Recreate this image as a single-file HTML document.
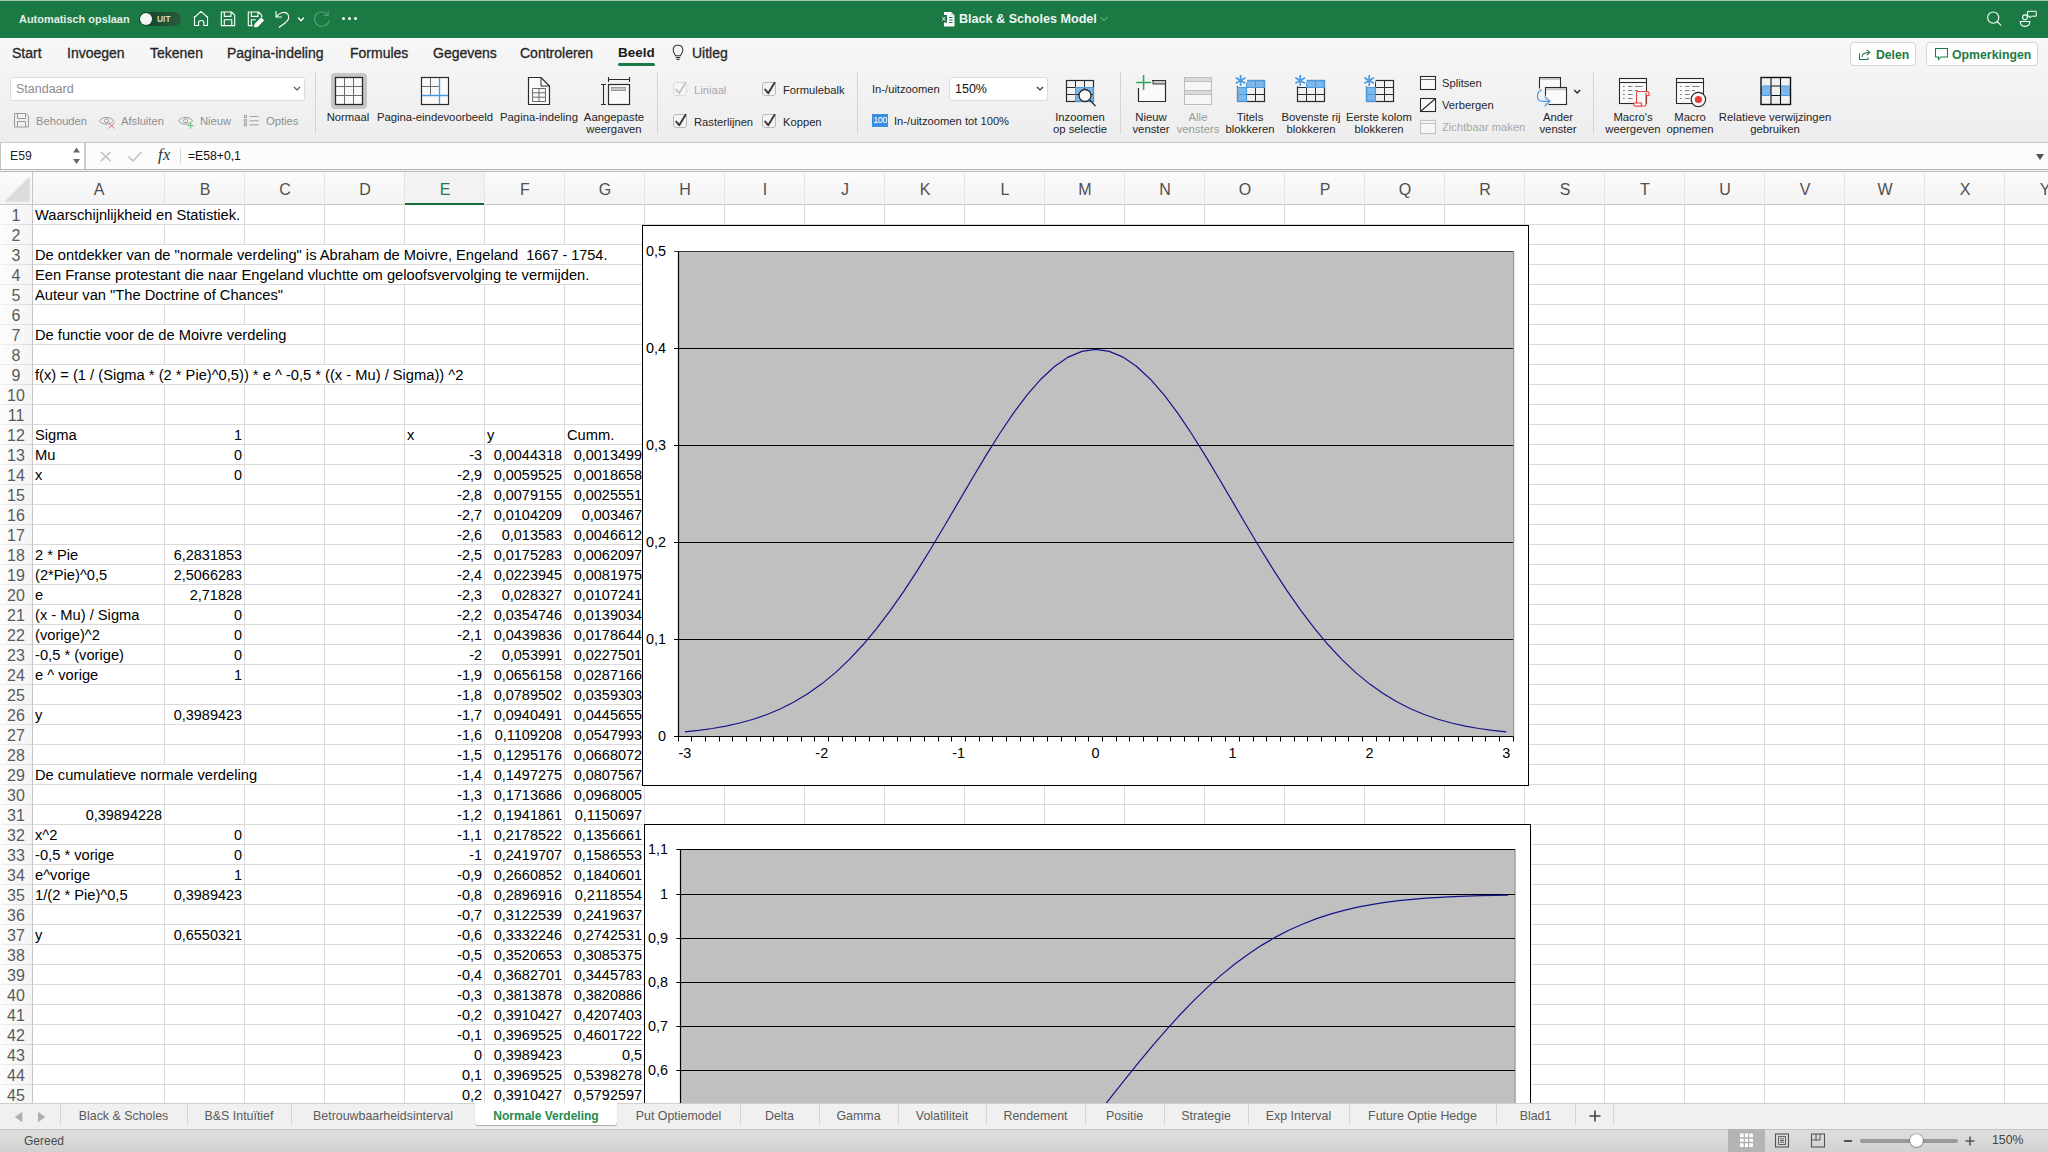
<!DOCTYPE html><html><head><meta charset="utf-8"><style>
*{margin:0;padding:0;box-sizing:border-box}
html,body{width:2048px;height:1152px;overflow:hidden;background:#fff;font-family:"Liberation Sans",sans-serif}
.a{position:absolute}
.t{position:absolute;white-space:nowrap}
.cell{position:absolute;white-space:nowrap;font-size:14.7px;color:#000;line-height:20px;height:20px}
.r{text-align:right}
.rib{font-size:11.3px;color:#262626;text-align:center;line-height:12px}
.dis{color:#9a9a9a}
.tab{font-size:14px;color:#262626;-webkit-text-stroke:0.3px #262626}
.sh{font-size:12.4px;color:#5a5a5a;text-align:center}
</style></head><body>
<div class="a" style="left:0;top:0;width:2048px;height:38px;background:#1b7944"></div>
<div class="a" style="left:0;top:0;width:2048px;height:1px;background:#a3c9b3"></div>
<div class="t" style="left:19px;top:11px;font-size:10.95px;font-weight:bold;color:#e2ede6;line-height:16px">Automatisch opslaan</div>
<div class="a" style="left:139px;top:12px;width:42px;height:14px;border-radius:7px;background:linear-gradient(90deg,#123f26,#2a5a3e)"></div>
<div class="a" style="left:140px;top:13px;width:12px;height:12px;border-radius:6px;background:#f6f6f6"></div>
<div class="t" style="left:157px;top:12px;font-size:8.4px;font-weight:bold;color:#c9d9cf;line-height:14px">UIT</div>
<svg class="a" style="left:0;top:0" width="400" height="38" viewBox="0 0 400 38" fill="none" stroke="#fff" stroke-width="1.1" stroke-linejoin="round" stroke-linecap="round">
<path d="M194.3 17.5 L201 11.3 L207.7 17.5 M194.5 16.5 V25.5 H198.6 V22.6 C198.6 19.8 203.9 19.8 203.9 22.6 V25.5 H207.5 V16.5"/>
<path d="M221.3 12 H231.5 L234.7 15.2 V25.6 H221.3 Z M224.3 12 V16.4 H231 V12 M224.3 25.6 V19.8 H231.8 V25.6"/>
<path d="M248.3 25.6 V12 H258.5 L261.7 15.2 V17 M251.3 12 V16.4 H258 V12 M251.3 25.6 V19.8 H255.5 M248.3 25.6 H252.5"/>
<path d="M254.6 26.8 L255.2 24.2 L261.2 18.2 L263.4 20.4 L257.4 26.4 Z" fill="#fff"/>
<path d="M276 11.5 V17 H281.5 M276.2 16.8 C280 12 285.5 11 288 14.5 C290 17.5 288 20.5 285 23 L279.3 27.3"/>
<path d="M298.4 18 L301 20.8 L303.6 18" stroke-width="1.3"/>
<path d="M327.6 15 C325.8 11.6 320.5 10.8 317.3 13.2 C313.6 16 313.6 22 317.3 24.8 C321 27.6 327.5 26 329 21 M328.2 11.2 V15.5 H324" stroke="#5a9e77"/>
</svg>
<div class="a" style="left:342px;top:17px;width:3px;height:3px;border-radius:2px;background:#fff"></div>
<div class="a" style="left:348px;top:17px;width:3px;height:3px;border-radius:2px;background:#fff"></div>
<div class="a" style="left:354px;top:17px;width:3px;height:3px;border-radius:2px;background:#fff"></div>
<svg class="a" style="left:0;top:0" width="1000" height="38" viewBox="0 0 1000 38">
<path d="M944 12 H951 L954.5 15.5 V26.5 H944 Z" fill="#fafafa"/><path d="M951 12 V15.5 H954.5" fill="#d8d8d8"/>
<path d="M949 17.5 H952.5 M949 20 H952.5 M949 22.5 H952.5" stroke="#1e7a46" stroke-width="1"/>
<rect x="940.5" y="15" width="6.5" height="7.5" fill="#1a6e3e"/><path d="M942 16.8 L945.5 20.8 M945.5 16.8 L942 20.8" stroke="#fff" stroke-width="0.9"/>
</svg>
<div class="t" style="left:959px;top:11px;font-size:12.6px;font-weight:bold;color:#eef4f0;line-height:16px">Black &amp; Scholes Model</div>
<svg class="a" style="left:1099px;top:15px" width="10" height="8" viewBox="0 0 10 8" fill="none" stroke="#8fc0a3" stroke-width="1"><path d="M1.5 2 L5 5.5 L8.5 2"/></svg>
<svg class="a" style="left:0;top:0" width="2048" height="38" viewBox="0 0 2048 38" fill="none" stroke="#fff" stroke-width="1.1" stroke-linecap="round">
<circle cx="1993.2" cy="17.6" r="5.6"/><path d="M1997.2 21.6 L2000.8 25.2"/>
<circle cx="2025" cy="17.3" r="2.4"/><path d="M2020.3 21.5 H2029.8 C2029.8 24.8 2027.5 26.4 2025 26.4 C2022.5 26.4 2020.3 24.8 2020.3 21.5 Z"/>
<path d="M2028 11.3 H2036.2 V16.2 H2031.5 L2029.8 18 V16.2 H2028 Z" stroke-width="1"/></svg>
<div class="a" style="left:0;top:38px;width:2048px;height:105px;background:linear-gradient(#f7f7f7,#ededed)"></div>
<div class="a" style="left:0;top:142px;width:2048px;height:1px;background:#d6d6d6"></div>
<div class="t tab" style="left:12px;top:44px;line-height:18px">Start</div>
<div class="t tab" style="left:67px;top:44px;line-height:18px">Invoegen</div>
<div class="t tab" style="left:150px;top:44px;line-height:18px">Tekenen</div>
<div class="t tab" style="left:227px;top:44px;line-height:18px">Pagina-indeling</div>
<div class="t tab" style="left:350px;top:44px;line-height:18px">Formules</div>
<div class="t tab" style="left:433px;top:44px;line-height:18px">Gegevens</div>
<div class="t tab" style="left:520px;top:44px;line-height:18px">Controleren</div>
<div class="t tab" style="left:618px;top:44px;line-height:18px;font-weight:bold;font-size:13.5px;color:#1c1c1c;-webkit-text-stroke:0">Beeld</div>
<div class="a" style="left:618px;top:63px;width:37px;height:3px;border-radius:2px;background:#1b7944"></div>
<svg class="a" style="left:0;top:38px" width="700" height="30" viewBox="0 38 700 30" fill="none" stroke="#333" stroke-width="1.05"><path d="M678 45.3 C675 45.3 673.2 47.5 673.2 50.2 C673.2 52.6 675 54 675.5 55.8 H680.5 C681 54 682.8 52.6 682.8 50.2 C682.8 47.5 681 45.3 678 45.3 Z M675.8 57.6 H680.2 M676.6 59.4 H679.4"/></svg>
<div class="t tab" style="left:692px;top:44px;line-height:18px">Uitleg</div>
<div class="a" style="left:1850px;top:42px;width:66px;height:24px;border:1px solid #d6d6d6;border-radius:4px;background:#fff"></div>
<svg class="a" style="left:1857px;top:46px" width="16" height="16" viewBox="0 0 16 16" fill="none" stroke="#1e7a46" stroke-width="1.05"><path d="M2.5 7.5 V13.5 H11 V11.5 M5 11 C5 7.5 8 6.5 12 6.5 M9.8 3.8 L12.8 6.5 L9.8 9.2"/></svg>
<div class="t" style="left:1876px;top:47px;font-size:12.2px;font-weight:bold;color:#1e7a46;line-height:16px">Delen</div>
<div class="a" style="left:1926px;top:42px;width:112px;height:24px;border:1px solid #d6d6d6;border-radius:4px;background:#fff"></div>
<svg class="a" style="left:1934px;top:46px" width="16" height="16" viewBox="0 0 16 16" fill="none" stroke="#1e7a46" stroke-width="1.05"><path d="M1.5 2.5 H13.5 V11 H7 L4.5 13.5 V11 H1.5 Z"/></svg>
<div class="t" style="left:1952px;top:47px;font-size:12.3px;font-weight:bold;color:#1e7a46;line-height:16px">Opmerkingen</div>
<div class="a" style="left:10px;top:77px;width:295px;height:24px;border:1px solid #dcdcdc;border-radius:3px;background:#fff"></div>
<div class="t" style="left:16px;top:81px;font-size:12.5px;color:#8c8c8c;line-height:16px">Standaard</div>
<svg class="a" style="left:292px;top:85px" width="10" height="8" viewBox="0 0 10 8" fill="none" stroke="#555" stroke-width="1.2"><path d="M2 2 L5 5 L8 2"/></svg>
<svg class="a" style="left:0;top:100px" width="320" height="40" viewBox="0 100 320 40" fill="none" stroke="#9a9a9a" stroke-width="1">
<path d="M14.5 113.5 H26 L28.5 116 V127 H14.5 Z M17.5 113.5 V118.5 H25.5 V113.5 M17.5 127 V121.5 H25.5 V127"/>
<path d="M99.5 120.8 C102.5 116.3 110.5 116.3 113.5 120.8 C110.5 125.3 102.5 125.3 99.5 120.8 Z"/><circle cx="106.5" cy="120.8" r="2"/>
<path d="M108.6 122.8 L114.6 128.5 M114.6 122.8 L108.6 128.5" stroke="#e86a6a" stroke-width="1"/>
<path d="M178.6 120.8 C181.6 116.3 189.6 116.3 192.6 120.8 C189.6 125.3 181.6 125.3 178.6 120.8 Z"/><circle cx="185.6" cy="120.8" r="2"/>
<path d="M190.7 122.5 V128.7 M187.6 125.6 H193.8" stroke="#5cbf7a" stroke-width="1"/>
<rect x="244.3" y="115.3" width="2.2" height="2.2" stroke-width="0.9"/><rect x="244.3" y="119.7" width="2.2" height="2.2" stroke-width="0.9"/><rect x="244.3" y="123.6" width="2.2" height="2.2" stroke-width="0.9"/>
<path d="M249.6 116.5 H258.7 M249.6 120.8 H258.7 M249.6 124.8 H258.7" stroke-width="0.9"/>
</svg>
<div class="t" style="left:36px;top:113px;font-size:11.2px;color:#8e8e8e;line-height:16px">Behouden</div>
<div class="t" style="left:121px;top:113px;font-size:11.2px;color:#8e8e8e;line-height:16px">Afsluiten</div>
<div class="t" style="left:200px;top:113px;font-size:11.2px;color:#8e8e8e;line-height:16px">Nieuw</div>
<div class="t" style="left:266px;top:113px;font-size:11.2px;color:#8e8e8e;line-height:16px">Opties</div>
<div class="a" style="left:315px;top:72px;width:1px;height:62px;background:#d4d4d4"></div>
<div class="a" style="left:657px;top:72px;width:1px;height:62px;background:#d4d4d4"></div>
<div class="a" style="left:857px;top:72px;width:1px;height:62px;background:#d4d4d4"></div>
<div class="a" style="left:1120px;top:72px;width:1px;height:62px;background:#d4d4d4"></div>
<div class="a" style="left:1593px;top:72px;width:1px;height:62px;background:#d4d4d4"></div>
<div class="a" style="left:673px;top:82px;width:14px;height:14px;border:1px solid #dadada;border-radius:3px;background:#f6f6f6"></div>
<svg class="a" style="left:673px;top:81px" width="16" height="16" viewBox="0 0 16 16" fill="none" stroke="#c4c4c4" stroke-width="2" stroke-linecap="round" stroke-linejoin="round"><path d="M3.2 8.6 L6.2 12.2 L12.6 1.8"/></svg>
<div class="a" style="left:673px;top:114px;width:14px;height:14px;border:1px solid #b8b8b8;border-radius:3px;background:#f4f4f4"></div>
<svg class="a" style="left:673px;top:113px" width="16" height="16" viewBox="0 0 16 16" fill="none" stroke="#3a3a3a" stroke-width="2" stroke-linecap="round" stroke-linejoin="round"><path d="M3.2 8.6 L6.2 12.2 L12.6 1.8"/></svg>
<div class="a" style="left:762px;top:82px;width:14px;height:14px;border:1px solid #b8b8b8;border-radius:3px;background:#f4f4f4"></div>
<svg class="a" style="left:762px;top:81px" width="16" height="16" viewBox="0 0 16 16" fill="none" stroke="#3a3a3a" stroke-width="2" stroke-linecap="round" stroke-linejoin="round"><path d="M3.2 8.6 L6.2 12.2 L12.6 1.8"/></svg>
<div class="a" style="left:762px;top:114px;width:14px;height:14px;border:1px solid #b8b8b8;border-radius:3px;background:#f4f4f4"></div>
<svg class="a" style="left:762px;top:113px" width="16" height="16" viewBox="0 0 16 16" fill="none" stroke="#3a3a3a" stroke-width="2" stroke-linecap="round" stroke-linejoin="round"><path d="M3.2 8.6 L6.2 12.2 L12.6 1.8"/></svg>
<div class="t dis" style="left:694px;top:82px;font-size:11.2px;line-height:16px;color:#a8a8a8">Liniaal</div>
<div class="t" style="left:694px;top:114px;font-size:11.2px;line-height:16px;color:#262626">Rasterlijnen</div>
<div class="t" style="left:783px;top:82px;font-size:11.2px;line-height:16px;color:#262626">Formulebalk</div>
<div class="t" style="left:783px;top:114px;font-size:11.2px;line-height:16px;color:#262626">Koppen</div>
<div class="t" style="left:872px;top:81px;font-size:11.2px;line-height:16px;color:#262626">In-/uitzoomen</div>
<div class="a" style="left:949px;top:77px;width:99px;height:24px;border:1px solid #dcdcdc;border-radius:3px;background:#fff"></div>
<div class="t" style="left:955px;top:81px;font-size:12.5px;line-height:16px;color:#111">150%</div>
<svg class="a" style="left:1035px;top:85px" width="10" height="8" viewBox="0 0 10 8" fill="none" stroke="#333" stroke-width="1.2"><path d="M2 2 L5 5 L8 2"/></svg>
<div class="a" style="left:872px;top:114px;width:16px;height:13px;background:#3a8ee0"></div>
<div class="t" style="left:872px;top:113px;width:16px;font-size:9px;line-height:15px;color:#fff;text-align:center;letter-spacing:-0.5px">100</div>
<div class="t" style="left:894px;top:113px;font-size:11.2px;line-height:16px;color:#262626">In-/uitzoomen tot 100%</div>
<div class="a" style="left:331px;top:73px;width:36px;height:36px;border-radius:4px;background:#c6c6c6"></div>
<svg class="a" style="left:0;top:0" width="2048" height="140" viewBox="0 0 2048 140" fill="none" stroke-linecap="butt"><rect x="335.5" y="77.5" width="27" height="27" fill="#fafafa" stroke="#2b2b2b" stroke-width="1.3"/><path d="M344.5 78 V104 M353.5 78 V104 M336 86.5 H362 M336 95.5 H362" stroke="#6b6b6b" stroke-width="1"/><rect x="421.5" y="77.5" width="27" height="27" fill="#fafafa" stroke="#2b2b2b" stroke-width="1.2"/><path d="M430.5 78 V95 M422 86.5 H439" stroke="#6b6b6b" stroke-width="1"/><path d="M439.5 78 V104 M422 95.5 H448" stroke="#4a9ae0" stroke-width="1.3"/><path d="M528.5 77.5 H541 L549.5 86 V104.5 H528.5 Z" fill="#fafafa" stroke="#2b2b2b" stroke-width="1.2"/><path d="M541 77.5 V86 H549.5" stroke="#2b2b2b" stroke-width="1"/><path d="M532.5 88.5 H545.5 V101.5 H532.5 Z M532.5 92.8 H545.5 M532.5 97.2 H545.5 M539 88.5 V101.5" stroke="#6b6b6b" stroke-width="1"/><path d="M608.5 79.5 H629.5 M608.5 77 V82 M629.5 77 V82" stroke="#2b2b2b" stroke-width="1.1"/><path d="M603.5 84.5 V105 M601 84.5 H606 M601 104.5 H606" stroke="#2b2b2b" stroke-width="1.1"/><rect x="608.5" y="84.5" width="21" height="20" fill="#fafafa" stroke="#2b2b2b" stroke-width="1.2"/><rect x="611.5" y="87.5" width="14" height="3" fill="#c4c4c4" stroke="#8a8a8a" stroke-width="0.8"/><rect x="1075.5" y="87.5" width="18" height="14" fill="#7db8ec"/><rect x="1066.5" y="80.5" width="27" height="21" fill="none" stroke="#2b2b2b" stroke-width="1.2"/><path d="M1075.5 81 V101 M1084.5 81 V101 M1067 87.5 H1093 M1067 94.5 H1093" stroke="#2b2b2b" stroke-width="1"/><path d="M1075.5 87.5 V101.5 H1093.5 V87.5 Z" stroke="#4a9ae0" stroke-width="1"/><circle cx="1085" cy="95.5" r="6" fill="#fafafa" stroke="#2b2b2b" stroke-width="1.3"/><path d="M1089.3 99.8 L1095.5 106" stroke="#2b2b2b" stroke-width="1.3"/><path d="M1138.5 88 V101.5 H1165.5 V80.5 H1152" fill="#fafafa" stroke="#2b2b2b" stroke-width="1.2"/><rect x="1153" y="80.5" width="12.5" height="3.5" fill="#c8c8c8" stroke="#2b2b2b" stroke-width="0.9"/><path d="M1143.6 75 V90 M1136.2 82.6 H1151.2" stroke="#2ea55c" stroke-width="1.5"/><rect x="1184.5" y="77.5" width="27" height="27" fill="#f6f6f6" stroke="#bdbdbd" stroke-width="1"/><rect x="1185" y="78" width="26" height="3.5" fill="#dadada"/><rect x="1185" y="91" width="26" height="3.5" fill="#dadada"/><path d="M1185 81.5 H1211 M1185 90.5 H1211 M1185 94.5 H1211" stroke="#bdbdbd" stroke-width="1"/><rect x="1246.5" y="80.5" width="18" height="7" fill="#7db8ec"/><rect x="1237" y="87.5" width="9.5" height="14" fill="#7db8ec"/><rect x="1237.5" y="80.5" width="27" height="21" fill="none" stroke="#2b2b2b" stroke-width="1.2"/><path d="M1246.5 81 V101 M1255.5 81 V101 M1237 87.5 H1264.5 M1237 94.5 H1264.5" stroke="#2b2b2b" stroke-width="1"/><path d="M1246.5 87.5 V80.5 H1264.5 V87.5 H1246.5 Z M1255.5 81 V87" stroke="#4a9ae0" stroke-width="1.1"/><path d="M1237.5 87.5 H1246.5 V101.5 H1237.5 Z M1237.5 94.5 H1246.5" stroke="#4a9ae0" stroke-width="1.1"/><circle cx="1240.6" cy="80.5" r="6.5" fill="#f3f3f3"/><path d="M1240.6 75 V86 M1235.8 77.75 L1245.4 83.25 M1235.8 83.25 L1245.4 77.75" stroke="#4a9ae0" stroke-width="1.7"/><rect x="1306.5" y="80.5" width="18" height="7" fill="#7db8ec"/><rect x="1297.5" y="80.5" width="27" height="21" fill="none" stroke="#2b2b2b" stroke-width="1.2"/><path d="M1306.5 81 V101 M1315.5 81 V101 M1297 87.5 H1324.5 M1297 94.5 H1324.5" stroke="#2b2b2b" stroke-width="1"/><path d="M1306.5 87.5 V80.5 H1324.5 V87.5 H1306.5 Z M1315.5 81 V87" stroke="#4a9ae0" stroke-width="1.1"/><circle cx="1300.2" cy="80.5" r="6.5" fill="#f3f3f3"/><path d="M1300.2 75 V86 M1295.4 77.75 L1305 83.25 M1295.4 83.25 L1305 77.75" stroke="#4a9ae0" stroke-width="1.7"/><rect x="1366" y="87.5" width="9.5" height="14" fill="#7db8ec"/><rect x="1366.5" y="80.5" width="27" height="21" fill="none" stroke="#2b2b2b" stroke-width="1.2"/><path d="M1375.5 81 V101 M1384.5 81 V101 M1366 87.5 H1393.5 M1366 94.5 H1393.5" stroke="#2b2b2b" stroke-width="1"/><path d="M1366.5 87.5 H1375.5 V101.5 H1366.5 Z M1366.5 94.5 H1375.5" stroke="#4a9ae0" stroke-width="1.1"/><circle cx="1369.2" cy="80.5" r="6.5" fill="#f3f3f3"/><path d="M1369.2 75 V86 M1364.4 77.75 L1374 83.25 M1364.4 83.25 L1374 77.75" stroke="#4a9ae0" stroke-width="1.7"/><rect x="1420.5" y="76.5" width="15" height="13" fill="#fafafa" stroke="#2b2b2b" stroke-width="1.1"/><path d="M1421 79.5 H1435" stroke="#6b6b6b" stroke-width="1"/><rect x="1420.5" y="98.5" width="15" height="13" fill="#fafafa" stroke="#2b2b2b" stroke-width="1.1"/><path d="M1421 111 L1435 99" stroke="#2b2b2b" stroke-width="1.1"/><rect x="1420.5" y="120.5" width="15" height="13" fill="#f6f6f6" stroke="#c2c2c2" stroke-width="1.1"/><path d="M1421 123.5 H1435" stroke="#c2c2c2" stroke-width="1"/><path d="M1539.5 88.5 V77.5 H1560.5 V87.5" fill="#fafafa" stroke="#2b2b2b" stroke-width="1.1"/><rect x="1540" y="78" width="20" height="2" fill="#c8c8c8"/><rect x="1545.5" y="87.5" width="21" height="17" fill="#fafafa" stroke="#2b2b2b" stroke-width="1.1"/><rect x="1546" y="88" width="20" height="2.2" fill="#c8c8c8"/><path d="M1541.8 89.6 C1535.8 92.2 1536 101.3 1542.5 101.3 H1549.6 M1544.6 96.6 L1549.8 101.3 L1544.6 106.2" stroke="#f2f2f2" stroke-width="3.2"/><path d="M1541.8 89.6 C1535.8 92.2 1536 101.3 1542.5 101.3 H1549.6 M1544.6 96.6 L1549.8 101.3 L1544.6 106.2" stroke="#4a9ae0" stroke-width="1.2"/><path d="M1574.2 90 L1577.2 93 L1580.2 90" stroke="#2b2b2b" stroke-width="1.4"/><rect x="1619.5" y="78.5" width="27" height="25" fill="#fafafa" stroke="#2b2b2b" stroke-width="1.1"/><path d="M1620 82.5 H1646" stroke="#2b2b2b" stroke-width="1.1"/><path d="M1623 86.5 H1624.8 M1628 86.5 H1632.5" stroke="#707070" stroke-width="0.9"/><path d="M1635 86.5 H1642.5" stroke="#707070" stroke-width="0.9"/><path d="M1623 90.5 H1624.8 M1628 90.5 H1632.5" stroke="#707070" stroke-width="0.9"/><path d="M1635 90.5 H1638" stroke="#707070" stroke-width="0.9"/><path d="M1623 94.5 H1624.8 M1628 94.5 H1632.5" stroke="#707070" stroke-width="0.9"/><path d="M1623 98.5 H1624.8 M1628 98.5 H1632.5" stroke="#707070" stroke-width="0.9"/><path d="M1636.5 106 V93 C1636.5 92 1637 91.5 1638 91.5 H1647 C1648.5 91.5 1649 92.5 1649 94 V95.5 H1646 V104.5 C1646 105.5 1645.5 106 1644.5 106 Z" fill="#fafafa" stroke="#e84040" stroke-width="1.1"/><path d="M1633.8 103 H1641.5 V106 H1635 C1634.2 106 1633.8 105.5 1633.8 104.7 Z M1646 95.5 V92.5" fill="#fafafa" stroke="#e84040" stroke-width="1.1"/><rect x="1676.5" y="78.5" width="27" height="25" fill="#fafafa" stroke="#2b2b2b" stroke-width="1.1"/><path d="M1677 82.5 H1703" stroke="#2b2b2b" stroke-width="1.1"/><path d="M1680 86.5 H1681.8 M1685 86.5 H1689.5" stroke="#707070" stroke-width="0.9"/><path d="M1692 86.5 H1699.5" stroke="#707070" stroke-width="0.9"/><path d="M1680 90.5 H1681.8 M1685 90.5 H1689.5" stroke="#707070" stroke-width="0.9"/><path d="M1692 90.5 H1695" stroke="#707070" stroke-width="0.9"/><path d="M1680 94.5 H1681.8 M1685 94.5 H1689.5" stroke="#707070" stroke-width="0.9"/><path d="M1680 98.5 H1681.8 M1685 98.5 H1689.5" stroke="#707070" stroke-width="0.9"/><circle cx="1698.4" cy="99.5" r="7.2" fill="#fafafa" stroke="#2b2b2b" stroke-width="1.2"/><circle cx="1698.4" cy="99.5" r="3.6" fill="#e63c3c"/><rect x="1761" y="86" width="10" height="9.5" fill="#7db8ec"/><rect x="1780.5" y="86" width="10" height="9.5" fill="#7db8ec"/><rect x="1761" y="77.5" width="29.5" height="27" fill="none" stroke="#111" stroke-width="1.4"/><path d="M1771 78 V104 M1780.5 78 V104 M1761.5 86 H1761.5 M1761.5 95.5 H1761.5" stroke="#111" stroke-width="1.1"/><path d="M1761.5 86 H1771 M1780.5 86 H1790 M1761.5 95.5 H1771 M1780.5 95.5 H1790" stroke="#4a9ae0" stroke-width="1.1"/><path d="M1771 86 H1780.5 M1771 95.5 H1780.5" stroke="#111" stroke-width="1"/></svg>
<div class="t rib " style="left:268px;top:111px;width:160px">Normaal</div>
<div class="t rib " style="left:355px;top:111px;width:160px">Pagina-eindevoorbeeld</div>
<div class="t rib " style="left:459px;top:111px;width:160px">Pagina-indeling</div>
<div class="t rib " style="left:534px;top:111px;width:160px">Aangepaste</div>
<div class="t rib " style="left:534px;top:123px;width:160px">weergaven</div>
<div class="t rib " style="left:1000px;top:111px;width:160px">Inzoomen</div>
<div class="t rib " style="left:1000px;top:123px;width:160px">op selectie</div>
<div class="t rib " style="left:1071px;top:111px;width:160px">Nieuw</div>
<div class="t rib " style="left:1071px;top:123px;width:160px">venster</div>
<div class="t rib dis" style="left:1118px;top:111px;width:160px">Alle</div>
<div class="t rib dis" style="left:1118px;top:123px;width:160px">vensters</div>
<div class="t rib " style="left:1170px;top:111px;width:160px">Titels</div>
<div class="t rib " style="left:1170px;top:123px;width:160px">blokkeren</div>
<div class="t rib " style="left:1231px;top:111px;width:160px">Bovenste rij</div>
<div class="t rib " style="left:1231px;top:123px;width:160px">blokkeren</div>
<div class="t rib " style="left:1299px;top:111px;width:160px">Eerste kolom</div>
<div class="t rib " style="left:1299px;top:123px;width:160px">blokkeren</div>
<div class="t" style="left:1442px;top:75px;font-size:11.2px;line-height:16px;color:#262626">Splitsen</div>
<div class="t" style="left:1442px;top:97px;font-size:11.2px;line-height:16px;color:#262626">Verbergen</div>
<div class="t" style="left:1442px;top:119px;font-size:11.2px;line-height:16px;color:#a8a8a8">Zichtbaar maken</div>
<div class="t rib " style="left:1478px;top:111px;width:160px">Ander</div>
<div class="t rib " style="left:1478px;top:123px;width:160px">venster</div>
<div class="t rib " style="left:1553px;top:111px;width:160px">Macro's</div>
<div class="t rib " style="left:1553px;top:123px;width:160px">weergeven</div>
<div class="t rib " style="left:1610px;top:111px;width:160px">Macro</div>
<div class="t rib " style="left:1610px;top:123px;width:160px">opnemen</div>
<div class="t rib " style="left:1695px;top:111px;width:160px">Relatieve verwijzingen</div>
<div class="t rib " style="left:1695px;top:123px;width:160px">gebruiken</div>
<div class="a" style="left:0;top:143px;width:2048px;height:26px;background:#fcfcfc"></div>
<div class="a" style="left:0;top:142px;width:2048px;height:1px;background:#c8c8c8"></div>
<div class="a" style="left:0;top:143px;width:86px;height:26px;background:#fff;border-left:1px solid #c4c4c4;border-right:2px solid #cfcfcf"></div>
<div class="t" style="left:10px;top:148px;font-size:12.2px;line-height:16px;color:#222">E59</div>
<svg class="a" style="left:72px;top:146px" width="10" height="20" viewBox="0 0 10 20" fill="#666"><path d="M1 6.5 L4.5 1.5 L8 6.5 Z M1 13 L4.5 18 L8 13 Z"/></svg>
<svg class="a" style="left:96px;top:148px" width="80" height="16" viewBox="0 0 80 16" fill="none" stroke="#c6c6c6" stroke-width="1.7"><path d="M4.8 3.8 L14.6 13.2 M14.6 3.8 L4.8 13.2"/><path d="M32.5 8.5 L37 13 L45.5 4"/></svg>
<div class="t" style="left:158px;top:145px;font-size:16.5px;line-height:20px;color:#333;font-family:'Liberation Serif',serif;font-style:italic;letter-spacing:0.5px">fx</div>
<div class="a" style="left:180px;top:149px;width:1px;height:15px;background:#d8d8d8"></div>
<div class="t" style="left:188px;top:148px;font-size:12.2px;line-height:16px;color:#111">=E58+0,1</div>
<svg class="a" style="left:2034px;top:152px" width="12" height="10" viewBox="0 0 12 10" fill="#555"><path d="M2 2 H10 L6 8 Z"/></svg>
<div class="a" style="left:0;top:169px;width:2048px;height:1px;background:#b4b4b4"></div>
<div class="a" style="left:0;top:170px;width:2048px;height:1px;background:#f4f4f4"></div>
<div class="a" style="left:0;top:171px;width:2048px;height:1px;background:#b8b8b8"></div>
<div class="a" style="left:0;top:172px;width:2048px;height:32px;background:linear-gradient(#fbfbfb,#f3f3f3)"></div>
<div class="a" style="left:0;top:204px;width:2048px;height:1px;background:#c8c8c8"></div>
<svg class="a" style="left:0;top:172px" width="32" height="32" viewBox="0 0 32 32"><path d="M4.3 29.8 L29.8 29.8 L29.8 4.2 Z" fill="#dcdcdc"/></svg>
<div class="a" style="left:32px;top:172px;width:1px;height:931px;background:#c6c6c6"></div>
<div class="a" style="left:404px;top:172px;width:81px;height:32px;background:#f2f2f2;border-left:1px solid #e2e2e2;border-right:1px solid #e2e2e2"></div>
<div class="a" style="left:404px;top:203px;width:81px;height:2px;background:#166a3a"></div>
<div class="t" style="left:33px;top:181px;width:132px;text-align:center;font-size:16px;line-height:18px;color:#505050">A</div>
<div class="a" style="left:164px;top:174px;width:1px;height:30px;background:#e4e4e4"></div>
<div class="t" style="left:165px;top:181px;width:80px;text-align:center;font-size:16px;line-height:18px;color:#505050">B</div>
<div class="a" style="left:244px;top:174px;width:1px;height:30px;background:#e4e4e4"></div>
<div class="t" style="left:245px;top:181px;width:80px;text-align:center;font-size:16px;line-height:18px;color:#505050">C</div>
<div class="a" style="left:324px;top:174px;width:1px;height:30px;background:#e4e4e4"></div>
<div class="t" style="left:325px;top:181px;width:80px;text-align:center;font-size:16px;line-height:18px;color:#505050">D</div>
<div class="a" style="left:404px;top:174px;width:1px;height:30px;background:#e4e4e4"></div>
<div class="t" style="left:405px;top:181px;width:80px;text-align:center;font-size:16px;line-height:18px;color:#1e7a46">E</div>
<div class="a" style="left:484px;top:174px;width:1px;height:30px;background:#e4e4e4"></div>
<div class="t" style="left:485px;top:181px;width:80px;text-align:center;font-size:16px;line-height:18px;color:#505050">F</div>
<div class="a" style="left:564px;top:174px;width:1px;height:30px;background:#e4e4e4"></div>
<div class="t" style="left:565px;top:181px;width:80px;text-align:center;font-size:16px;line-height:18px;color:#505050">G</div>
<div class="a" style="left:644px;top:174px;width:1px;height:30px;background:#e4e4e4"></div>
<div class="t" style="left:645px;top:181px;width:80px;text-align:center;font-size:16px;line-height:18px;color:#505050">H</div>
<div class="a" style="left:724px;top:174px;width:1px;height:30px;background:#e4e4e4"></div>
<div class="t" style="left:725px;top:181px;width:80px;text-align:center;font-size:16px;line-height:18px;color:#505050">I</div>
<div class="a" style="left:804px;top:174px;width:1px;height:30px;background:#e4e4e4"></div>
<div class="t" style="left:805px;top:181px;width:80px;text-align:center;font-size:16px;line-height:18px;color:#505050">J</div>
<div class="a" style="left:884px;top:174px;width:1px;height:30px;background:#e4e4e4"></div>
<div class="t" style="left:885px;top:181px;width:80px;text-align:center;font-size:16px;line-height:18px;color:#505050">K</div>
<div class="a" style="left:964px;top:174px;width:1px;height:30px;background:#e4e4e4"></div>
<div class="t" style="left:965px;top:181px;width:80px;text-align:center;font-size:16px;line-height:18px;color:#505050">L</div>
<div class="a" style="left:1044px;top:174px;width:1px;height:30px;background:#e4e4e4"></div>
<div class="t" style="left:1045px;top:181px;width:80px;text-align:center;font-size:16px;line-height:18px;color:#505050">M</div>
<div class="a" style="left:1124px;top:174px;width:1px;height:30px;background:#e4e4e4"></div>
<div class="t" style="left:1125px;top:181px;width:80px;text-align:center;font-size:16px;line-height:18px;color:#505050">N</div>
<div class="a" style="left:1204px;top:174px;width:1px;height:30px;background:#e4e4e4"></div>
<div class="t" style="left:1205px;top:181px;width:80px;text-align:center;font-size:16px;line-height:18px;color:#505050">O</div>
<div class="a" style="left:1284px;top:174px;width:1px;height:30px;background:#e4e4e4"></div>
<div class="t" style="left:1285px;top:181px;width:80px;text-align:center;font-size:16px;line-height:18px;color:#505050">P</div>
<div class="a" style="left:1364px;top:174px;width:1px;height:30px;background:#e4e4e4"></div>
<div class="t" style="left:1365px;top:181px;width:80px;text-align:center;font-size:16px;line-height:18px;color:#505050">Q</div>
<div class="a" style="left:1444px;top:174px;width:1px;height:30px;background:#e4e4e4"></div>
<div class="t" style="left:1445px;top:181px;width:80px;text-align:center;font-size:16px;line-height:18px;color:#505050">R</div>
<div class="a" style="left:1524px;top:174px;width:1px;height:30px;background:#e4e4e4"></div>
<div class="t" style="left:1525px;top:181px;width:80px;text-align:center;font-size:16px;line-height:18px;color:#505050">S</div>
<div class="a" style="left:1604px;top:174px;width:1px;height:30px;background:#e4e4e4"></div>
<div class="t" style="left:1605px;top:181px;width:80px;text-align:center;font-size:16px;line-height:18px;color:#505050">T</div>
<div class="a" style="left:1684px;top:174px;width:1px;height:30px;background:#e4e4e4"></div>
<div class="t" style="left:1685px;top:181px;width:80px;text-align:center;font-size:16px;line-height:18px;color:#505050">U</div>
<div class="a" style="left:1764px;top:174px;width:1px;height:30px;background:#e4e4e4"></div>
<div class="t" style="left:1765px;top:181px;width:80px;text-align:center;font-size:16px;line-height:18px;color:#505050">V</div>
<div class="a" style="left:1844px;top:174px;width:1px;height:30px;background:#e4e4e4"></div>
<div class="t" style="left:1845px;top:181px;width:80px;text-align:center;font-size:16px;line-height:18px;color:#505050">W</div>
<div class="a" style="left:1924px;top:174px;width:1px;height:30px;background:#e4e4e4"></div>
<div class="t" style="left:1925px;top:181px;width:80px;text-align:center;font-size:16px;line-height:18px;color:#505050">X</div>
<div class="a" style="left:2004px;top:174px;width:1px;height:30px;background:#e4e4e4"></div>
<div class="t" style="left:2005px;top:181px;width:80px;text-align:center;font-size:16px;line-height:18px;color:#505050">Y</div>
<div class="a" style="left:2084px;top:174px;width:1px;height:30px;background:#e4e4e4"></div>
<div class="t" style="left:2085px;top:181px;width:80px;text-align:center;font-size:16px;line-height:18px;color:#505050">Z</div>
<div class="a" style="left:2164px;top:174px;width:1px;height:30px;background:#e4e4e4"></div>
<div class="a" style="left:0;top:224px;width:2048px;height:1px;background:#dadada"></div>
<div class="a" style="left:0;top:244px;width:2048px;height:1px;background:#dadada"></div>
<div class="a" style="left:0;top:264px;width:2048px;height:1px;background:#dadada"></div>
<div class="a" style="left:0;top:284px;width:2048px;height:1px;background:#dadada"></div>
<div class="a" style="left:0;top:304px;width:2048px;height:1px;background:#dadada"></div>
<div class="a" style="left:0;top:324px;width:2048px;height:1px;background:#dadada"></div>
<div class="a" style="left:0;top:344px;width:2048px;height:1px;background:#dadada"></div>
<div class="a" style="left:0;top:364px;width:2048px;height:1px;background:#dadada"></div>
<div class="a" style="left:0;top:384px;width:2048px;height:1px;background:#dadada"></div>
<div class="a" style="left:0;top:404px;width:2048px;height:1px;background:#dadada"></div>
<div class="a" style="left:0;top:424px;width:2048px;height:1px;background:#dadada"></div>
<div class="a" style="left:0;top:444px;width:2048px;height:1px;background:#dadada"></div>
<div class="a" style="left:0;top:464px;width:2048px;height:1px;background:#dadada"></div>
<div class="a" style="left:0;top:484px;width:2048px;height:1px;background:#dadada"></div>
<div class="a" style="left:0;top:504px;width:2048px;height:1px;background:#dadada"></div>
<div class="a" style="left:0;top:524px;width:2048px;height:1px;background:#dadada"></div>
<div class="a" style="left:0;top:544px;width:2048px;height:1px;background:#dadada"></div>
<div class="a" style="left:0;top:564px;width:2048px;height:1px;background:#dadada"></div>
<div class="a" style="left:0;top:584px;width:2048px;height:1px;background:#dadada"></div>
<div class="a" style="left:0;top:604px;width:2048px;height:1px;background:#dadada"></div>
<div class="a" style="left:0;top:624px;width:2048px;height:1px;background:#dadada"></div>
<div class="a" style="left:0;top:644px;width:2048px;height:1px;background:#dadada"></div>
<div class="a" style="left:0;top:664px;width:2048px;height:1px;background:#dadada"></div>
<div class="a" style="left:0;top:684px;width:2048px;height:1px;background:#dadada"></div>
<div class="a" style="left:0;top:704px;width:2048px;height:1px;background:#dadada"></div>
<div class="a" style="left:0;top:724px;width:2048px;height:1px;background:#dadada"></div>
<div class="a" style="left:0;top:744px;width:2048px;height:1px;background:#dadada"></div>
<div class="a" style="left:0;top:764px;width:2048px;height:1px;background:#dadada"></div>
<div class="a" style="left:0;top:784px;width:2048px;height:1px;background:#dadada"></div>
<div class="a" style="left:0;top:804px;width:2048px;height:1px;background:#dadada"></div>
<div class="a" style="left:0;top:824px;width:2048px;height:1px;background:#dadada"></div>
<div class="a" style="left:0;top:844px;width:2048px;height:1px;background:#dadada"></div>
<div class="a" style="left:0;top:864px;width:2048px;height:1px;background:#dadada"></div>
<div class="a" style="left:0;top:884px;width:2048px;height:1px;background:#dadada"></div>
<div class="a" style="left:0;top:904px;width:2048px;height:1px;background:#dadada"></div>
<div class="a" style="left:0;top:924px;width:2048px;height:1px;background:#dadada"></div>
<div class="a" style="left:0;top:944px;width:2048px;height:1px;background:#dadada"></div>
<div class="a" style="left:0;top:964px;width:2048px;height:1px;background:#dadada"></div>
<div class="a" style="left:0;top:984px;width:2048px;height:1px;background:#dadada"></div>
<div class="a" style="left:0;top:1004px;width:2048px;height:1px;background:#dadada"></div>
<div class="a" style="left:0;top:1024px;width:2048px;height:1px;background:#dadada"></div>
<div class="a" style="left:0;top:1044px;width:2048px;height:1px;background:#dadada"></div>
<div class="a" style="left:0;top:1064px;width:2048px;height:1px;background:#dadada"></div>
<div class="a" style="left:0;top:1084px;width:2048px;height:1px;background:#dadada"></div>
<div class="a" style="left:0;top:1104px;width:2048px;height:1px;background:#dadada"></div>
<div class="a" style="left:0;top:1124px;width:2048px;height:1px;background:#dadada"></div>
<div class="a" style="left:164px;top:204px;width:1px;height:900px;background:#dadada"></div>
<div class="a" style="left:244px;top:204px;width:1px;height:900px;background:#dadada"></div>
<div class="a" style="left:324px;top:204px;width:1px;height:900px;background:#dadada"></div>
<div class="a" style="left:404px;top:204px;width:1px;height:900px;background:#dadada"></div>
<div class="a" style="left:484px;top:204px;width:1px;height:900px;background:#dadada"></div>
<div class="a" style="left:564px;top:204px;width:1px;height:900px;background:#dadada"></div>
<div class="a" style="left:644px;top:204px;width:1px;height:900px;background:#dadada"></div>
<div class="a" style="left:724px;top:204px;width:1px;height:900px;background:#dadada"></div>
<div class="a" style="left:804px;top:204px;width:1px;height:900px;background:#dadada"></div>
<div class="a" style="left:884px;top:204px;width:1px;height:900px;background:#dadada"></div>
<div class="a" style="left:964px;top:204px;width:1px;height:900px;background:#dadada"></div>
<div class="a" style="left:1044px;top:204px;width:1px;height:900px;background:#dadada"></div>
<div class="a" style="left:1124px;top:204px;width:1px;height:900px;background:#dadada"></div>
<div class="a" style="left:1204px;top:204px;width:1px;height:900px;background:#dadada"></div>
<div class="a" style="left:1284px;top:204px;width:1px;height:900px;background:#dadada"></div>
<div class="a" style="left:1364px;top:204px;width:1px;height:900px;background:#dadada"></div>
<div class="a" style="left:1444px;top:204px;width:1px;height:900px;background:#dadada"></div>
<div class="a" style="left:1524px;top:204px;width:1px;height:900px;background:#dadada"></div>
<div class="a" style="left:1604px;top:204px;width:1px;height:900px;background:#dadada"></div>
<div class="a" style="left:1684px;top:204px;width:1px;height:900px;background:#dadada"></div>
<div class="a" style="left:1764px;top:204px;width:1px;height:900px;background:#dadada"></div>
<div class="a" style="left:1844px;top:204px;width:1px;height:900px;background:#dadada"></div>
<div class="a" style="left:1924px;top:204px;width:1px;height:900px;background:#dadada"></div>
<div class="a" style="left:2004px;top:204px;width:1px;height:900px;background:#dadada"></div>
<div class="a" style="left:2084px;top:204px;width:1px;height:900px;background:#dadada"></div>
<div class="a" style="left:2164px;top:204px;width:1px;height:900px;background:#dadada"></div>
<div class="a" style="left:0;top:205px;width:32px;height:898px;background:linear-gradient(90deg,#fdfdfd,#f4f4f4)"></div>
<div class="a" style="left:32px;top:172px;width:1px;height:931px;background:#c6c6c6"></div>
<div class="a" style="left:0;top:224px;width:32px;height:1px;background:linear-gradient(90deg,#f2f2f2,#d8d8d8)"></div>
<div class="t" style="left:0;top:206px;width:32px;text-align:center;font-size:16px;line-height:20px;color:#5a5a5a">1</div>
<div class="a" style="left:0;top:244px;width:32px;height:1px;background:linear-gradient(90deg,#f2f2f2,#d8d8d8)"></div>
<div class="t" style="left:0;top:226px;width:32px;text-align:center;font-size:16px;line-height:20px;color:#5a5a5a">2</div>
<div class="a" style="left:0;top:264px;width:32px;height:1px;background:linear-gradient(90deg,#f2f2f2,#d8d8d8)"></div>
<div class="t" style="left:0;top:246px;width:32px;text-align:center;font-size:16px;line-height:20px;color:#5a5a5a">3</div>
<div class="a" style="left:0;top:284px;width:32px;height:1px;background:linear-gradient(90deg,#f2f2f2,#d8d8d8)"></div>
<div class="t" style="left:0;top:266px;width:32px;text-align:center;font-size:16px;line-height:20px;color:#5a5a5a">4</div>
<div class="a" style="left:0;top:304px;width:32px;height:1px;background:linear-gradient(90deg,#f2f2f2,#d8d8d8)"></div>
<div class="t" style="left:0;top:286px;width:32px;text-align:center;font-size:16px;line-height:20px;color:#5a5a5a">5</div>
<div class="a" style="left:0;top:324px;width:32px;height:1px;background:linear-gradient(90deg,#f2f2f2,#d8d8d8)"></div>
<div class="t" style="left:0;top:306px;width:32px;text-align:center;font-size:16px;line-height:20px;color:#5a5a5a">6</div>
<div class="a" style="left:0;top:344px;width:32px;height:1px;background:linear-gradient(90deg,#f2f2f2,#d8d8d8)"></div>
<div class="t" style="left:0;top:326px;width:32px;text-align:center;font-size:16px;line-height:20px;color:#5a5a5a">7</div>
<div class="a" style="left:0;top:364px;width:32px;height:1px;background:linear-gradient(90deg,#f2f2f2,#d8d8d8)"></div>
<div class="t" style="left:0;top:346px;width:32px;text-align:center;font-size:16px;line-height:20px;color:#5a5a5a">8</div>
<div class="a" style="left:0;top:384px;width:32px;height:1px;background:linear-gradient(90deg,#f2f2f2,#d8d8d8)"></div>
<div class="t" style="left:0;top:366px;width:32px;text-align:center;font-size:16px;line-height:20px;color:#5a5a5a">9</div>
<div class="a" style="left:0;top:404px;width:32px;height:1px;background:linear-gradient(90deg,#f2f2f2,#d8d8d8)"></div>
<div class="t" style="left:0;top:386px;width:32px;text-align:center;font-size:16px;line-height:20px;color:#5a5a5a">10</div>
<div class="a" style="left:0;top:424px;width:32px;height:1px;background:linear-gradient(90deg,#f2f2f2,#d8d8d8)"></div>
<div class="t" style="left:0;top:406px;width:32px;text-align:center;font-size:16px;line-height:20px;color:#5a5a5a">11</div>
<div class="a" style="left:0;top:444px;width:32px;height:1px;background:linear-gradient(90deg,#f2f2f2,#d8d8d8)"></div>
<div class="t" style="left:0;top:426px;width:32px;text-align:center;font-size:16px;line-height:20px;color:#5a5a5a">12</div>
<div class="a" style="left:0;top:464px;width:32px;height:1px;background:linear-gradient(90deg,#f2f2f2,#d8d8d8)"></div>
<div class="t" style="left:0;top:446px;width:32px;text-align:center;font-size:16px;line-height:20px;color:#5a5a5a">13</div>
<div class="a" style="left:0;top:484px;width:32px;height:1px;background:linear-gradient(90deg,#f2f2f2,#d8d8d8)"></div>
<div class="t" style="left:0;top:466px;width:32px;text-align:center;font-size:16px;line-height:20px;color:#5a5a5a">14</div>
<div class="a" style="left:0;top:504px;width:32px;height:1px;background:linear-gradient(90deg,#f2f2f2,#d8d8d8)"></div>
<div class="t" style="left:0;top:486px;width:32px;text-align:center;font-size:16px;line-height:20px;color:#5a5a5a">15</div>
<div class="a" style="left:0;top:524px;width:32px;height:1px;background:linear-gradient(90deg,#f2f2f2,#d8d8d8)"></div>
<div class="t" style="left:0;top:506px;width:32px;text-align:center;font-size:16px;line-height:20px;color:#5a5a5a">16</div>
<div class="a" style="left:0;top:544px;width:32px;height:1px;background:linear-gradient(90deg,#f2f2f2,#d8d8d8)"></div>
<div class="t" style="left:0;top:526px;width:32px;text-align:center;font-size:16px;line-height:20px;color:#5a5a5a">17</div>
<div class="a" style="left:0;top:564px;width:32px;height:1px;background:linear-gradient(90deg,#f2f2f2,#d8d8d8)"></div>
<div class="t" style="left:0;top:546px;width:32px;text-align:center;font-size:16px;line-height:20px;color:#5a5a5a">18</div>
<div class="a" style="left:0;top:584px;width:32px;height:1px;background:linear-gradient(90deg,#f2f2f2,#d8d8d8)"></div>
<div class="t" style="left:0;top:566px;width:32px;text-align:center;font-size:16px;line-height:20px;color:#5a5a5a">19</div>
<div class="a" style="left:0;top:604px;width:32px;height:1px;background:linear-gradient(90deg,#f2f2f2,#d8d8d8)"></div>
<div class="t" style="left:0;top:586px;width:32px;text-align:center;font-size:16px;line-height:20px;color:#5a5a5a">20</div>
<div class="a" style="left:0;top:624px;width:32px;height:1px;background:linear-gradient(90deg,#f2f2f2,#d8d8d8)"></div>
<div class="t" style="left:0;top:606px;width:32px;text-align:center;font-size:16px;line-height:20px;color:#5a5a5a">21</div>
<div class="a" style="left:0;top:644px;width:32px;height:1px;background:linear-gradient(90deg,#f2f2f2,#d8d8d8)"></div>
<div class="t" style="left:0;top:626px;width:32px;text-align:center;font-size:16px;line-height:20px;color:#5a5a5a">22</div>
<div class="a" style="left:0;top:664px;width:32px;height:1px;background:linear-gradient(90deg,#f2f2f2,#d8d8d8)"></div>
<div class="t" style="left:0;top:646px;width:32px;text-align:center;font-size:16px;line-height:20px;color:#5a5a5a">23</div>
<div class="a" style="left:0;top:684px;width:32px;height:1px;background:linear-gradient(90deg,#f2f2f2,#d8d8d8)"></div>
<div class="t" style="left:0;top:666px;width:32px;text-align:center;font-size:16px;line-height:20px;color:#5a5a5a">24</div>
<div class="a" style="left:0;top:704px;width:32px;height:1px;background:linear-gradient(90deg,#f2f2f2,#d8d8d8)"></div>
<div class="t" style="left:0;top:686px;width:32px;text-align:center;font-size:16px;line-height:20px;color:#5a5a5a">25</div>
<div class="a" style="left:0;top:724px;width:32px;height:1px;background:linear-gradient(90deg,#f2f2f2,#d8d8d8)"></div>
<div class="t" style="left:0;top:706px;width:32px;text-align:center;font-size:16px;line-height:20px;color:#5a5a5a">26</div>
<div class="a" style="left:0;top:744px;width:32px;height:1px;background:linear-gradient(90deg,#f2f2f2,#d8d8d8)"></div>
<div class="t" style="left:0;top:726px;width:32px;text-align:center;font-size:16px;line-height:20px;color:#5a5a5a">27</div>
<div class="a" style="left:0;top:764px;width:32px;height:1px;background:linear-gradient(90deg,#f2f2f2,#d8d8d8)"></div>
<div class="t" style="left:0;top:746px;width:32px;text-align:center;font-size:16px;line-height:20px;color:#5a5a5a">28</div>
<div class="a" style="left:0;top:784px;width:32px;height:1px;background:linear-gradient(90deg,#f2f2f2,#d8d8d8)"></div>
<div class="t" style="left:0;top:766px;width:32px;text-align:center;font-size:16px;line-height:20px;color:#5a5a5a">29</div>
<div class="a" style="left:0;top:804px;width:32px;height:1px;background:linear-gradient(90deg,#f2f2f2,#d8d8d8)"></div>
<div class="t" style="left:0;top:786px;width:32px;text-align:center;font-size:16px;line-height:20px;color:#5a5a5a">30</div>
<div class="a" style="left:0;top:824px;width:32px;height:1px;background:linear-gradient(90deg,#f2f2f2,#d8d8d8)"></div>
<div class="t" style="left:0;top:806px;width:32px;text-align:center;font-size:16px;line-height:20px;color:#5a5a5a">31</div>
<div class="a" style="left:0;top:844px;width:32px;height:1px;background:linear-gradient(90deg,#f2f2f2,#d8d8d8)"></div>
<div class="t" style="left:0;top:826px;width:32px;text-align:center;font-size:16px;line-height:20px;color:#5a5a5a">32</div>
<div class="a" style="left:0;top:864px;width:32px;height:1px;background:linear-gradient(90deg,#f2f2f2,#d8d8d8)"></div>
<div class="t" style="left:0;top:846px;width:32px;text-align:center;font-size:16px;line-height:20px;color:#5a5a5a">33</div>
<div class="a" style="left:0;top:884px;width:32px;height:1px;background:linear-gradient(90deg,#f2f2f2,#d8d8d8)"></div>
<div class="t" style="left:0;top:866px;width:32px;text-align:center;font-size:16px;line-height:20px;color:#5a5a5a">34</div>
<div class="a" style="left:0;top:904px;width:32px;height:1px;background:linear-gradient(90deg,#f2f2f2,#d8d8d8)"></div>
<div class="t" style="left:0;top:886px;width:32px;text-align:center;font-size:16px;line-height:20px;color:#5a5a5a">35</div>
<div class="a" style="left:0;top:924px;width:32px;height:1px;background:linear-gradient(90deg,#f2f2f2,#d8d8d8)"></div>
<div class="t" style="left:0;top:906px;width:32px;text-align:center;font-size:16px;line-height:20px;color:#5a5a5a">36</div>
<div class="a" style="left:0;top:944px;width:32px;height:1px;background:linear-gradient(90deg,#f2f2f2,#d8d8d8)"></div>
<div class="t" style="left:0;top:926px;width:32px;text-align:center;font-size:16px;line-height:20px;color:#5a5a5a">37</div>
<div class="a" style="left:0;top:964px;width:32px;height:1px;background:linear-gradient(90deg,#f2f2f2,#d8d8d8)"></div>
<div class="t" style="left:0;top:946px;width:32px;text-align:center;font-size:16px;line-height:20px;color:#5a5a5a">38</div>
<div class="a" style="left:0;top:984px;width:32px;height:1px;background:linear-gradient(90deg,#f2f2f2,#d8d8d8)"></div>
<div class="t" style="left:0;top:966px;width:32px;text-align:center;font-size:16px;line-height:20px;color:#5a5a5a">39</div>
<div class="a" style="left:0;top:1004px;width:32px;height:1px;background:linear-gradient(90deg,#f2f2f2,#d8d8d8)"></div>
<div class="t" style="left:0;top:986px;width:32px;text-align:center;font-size:16px;line-height:20px;color:#5a5a5a">40</div>
<div class="a" style="left:0;top:1024px;width:32px;height:1px;background:linear-gradient(90deg,#f2f2f2,#d8d8d8)"></div>
<div class="t" style="left:0;top:1006px;width:32px;text-align:center;font-size:16px;line-height:20px;color:#5a5a5a">41</div>
<div class="a" style="left:0;top:1044px;width:32px;height:1px;background:linear-gradient(90deg,#f2f2f2,#d8d8d8)"></div>
<div class="t" style="left:0;top:1026px;width:32px;text-align:center;font-size:16px;line-height:20px;color:#5a5a5a">42</div>
<div class="a" style="left:0;top:1064px;width:32px;height:1px;background:linear-gradient(90deg,#f2f2f2,#d8d8d8)"></div>
<div class="t" style="left:0;top:1046px;width:32px;text-align:center;font-size:16px;line-height:20px;color:#5a5a5a">43</div>
<div class="a" style="left:0;top:1084px;width:32px;height:1px;background:linear-gradient(90deg,#f2f2f2,#d8d8d8)"></div>
<div class="t" style="left:0;top:1066px;width:32px;text-align:center;font-size:16px;line-height:20px;color:#5a5a5a">44</div>
<div class="a" style="left:0;top:1104px;width:32px;height:1px;background:linear-gradient(90deg,#f2f2f2,#d8d8d8)"></div>
<div class="t" style="left:0;top:1086px;width:32px;text-align:center;font-size:16px;line-height:20px;color:#5a5a5a">45</div>
<div class="a" style="left:33px;top:205px;width:211px;height:19px;background:#fff"></div>
<div class="cell" style="left:35px;top:205px">Waarschijnlijkheid en Statistiek.</div>
<div class="a" style="left:33px;top:245px;width:611px;height:19px;background:#fff"></div>
<div class="cell" style="left:35px;top:245px">De ontdekker van de "normale verdeling" is Abraham de Moivre, Engeland&nbsp; <span style="font-size:14.45px">1667 - 1754.</span></div>
<div class="a" style="left:33px;top:265px;width:611px;height:19px;background:#fff"></div>
<div class="cell" style="left:35px;top:265px">Een Franse protestant die naar Engeland vluchtte om geloofsvervolging te vermijden.</div>
<div class="a" style="left:33px;top:285px;width:291px;height:19px;background:#fff"></div>
<div class="cell" style="left:35px;top:285px">Auteur van "The Doctrine of Chances"</div>
<div class="a" style="left:33px;top:325px;width:291px;height:19px;background:#fff"></div>
<div class="cell" style="left:35px;top:325px">De functie voor de de Moivre verdeling</div>
<div class="a" style="left:33px;top:365px;width:451px;height:19px;background:#fff"></div>
<div class="cell" style="left:35px;top:365px">f(x) = (1 / (Sigma * (2 * Pie)^0,5)) * e ^ -0,5 * ((x - Mu) / Sigma)) ^2</div>
<div class="cell" style="left:35px;top:425px">Sigma</div>
<div class="cell r" style="left:164px;top:425px;width:78px;font-size:14.45px">1</div>
<div class="cell" style="left:407px;top:425px">x</div>
<div class="cell" style="left:487px;top:425px">y</div>
<div class="cell" style="left:567px;top:425px">Cumm.</div>
<div class="cell" style="left:35px;top:445px">Mu</div>
<div class="cell r" style="left:164px;top:445px;width:78px;font-size:14.45px">0</div>
<div class="cell" style="left:35px;top:465px">x</div>
<div class="cell r" style="left:164px;top:465px;width:78px;font-size:14.45px">0</div>
<div class="cell" style="left:35px;top:545px">2 * Pie</div>
<div class="cell r" style="left:164px;top:545px;width:78px;font-size:14.45px">6,2831853</div>
<div class="cell" style="left:35px;top:565px">(2*Pie)^0,5</div>
<div class="cell r" style="left:164px;top:565px;width:78px;font-size:14.45px">2,5066283</div>
<div class="cell" style="left:35px;top:585px">e</div>
<div class="cell r" style="left:164px;top:585px;width:78px;font-size:14.45px">2,71828</div>
<div class="cell" style="left:35px;top:605px">(x - Mu) / Sigma</div>
<div class="cell r" style="left:164px;top:605px;width:78px;font-size:14.45px">0</div>
<div class="cell" style="left:35px;top:625px">(vorige)^2</div>
<div class="cell r" style="left:164px;top:625px;width:78px;font-size:14.45px">0</div>
<div class="cell" style="left:35px;top:645px">-0,5 * (vorige)</div>
<div class="cell r" style="left:164px;top:645px;width:78px;font-size:14.45px">0</div>
<div class="cell" style="left:35px;top:665px">e ^ vorige</div>
<div class="cell r" style="left:164px;top:665px;width:78px;font-size:14.45px">1</div>
<div class="cell" style="left:35px;top:705px">y</div>
<div class="cell r" style="left:164px;top:705px;width:78px;font-size:14.45px">0,3989423</div>
<div class="a" style="left:33px;top:765px;width:291px;height:19px;background:#fff"></div>
<div class="cell" style="left:35px;top:765px">De cumulatieve normale verdeling</div>
<div class="cell r" style="left:32px;top:805px;width:130px;font-size:14.45px">0,39894228</div>
<div class="cell" style="left:35px;top:825px">x^2</div>
<div class="cell r" style="left:164px;top:825px;width:78px;font-size:14.45px">0</div>
<div class="cell" style="left:35px;top:845px">-0,5 * vorige</div>
<div class="cell r" style="left:164px;top:845px;width:78px;font-size:14.45px">0</div>
<div class="cell" style="left:35px;top:865px">e^vorige</div>
<div class="cell r" style="left:164px;top:865px;width:78px;font-size:14.45px">1</div>
<div class="cell" style="left:35px;top:885px">1/(2 * Pie)^0,5</div>
<div class="cell r" style="left:164px;top:885px;width:78px;font-size:14.45px">0,3989423</div>
<div class="cell" style="left:35px;top:925px">y</div>
<div class="cell r" style="left:164px;top:925px;width:78px;font-size:14.45px">0,6550321</div>
<div class="cell r" style="left:404px;top:445px;width:78px;font-size:14.45px">-3</div>
<div class="cell r" style="left:484px;top:445px;width:78px;font-size:14.45px">0,0044318</div>
<div class="cell r" style="left:564px;top:445px;width:78px;font-size:14.45px">0,0013499</div>
<div class="cell r" style="left:404px;top:465px;width:78px;font-size:14.45px">-2,9</div>
<div class="cell r" style="left:484px;top:465px;width:78px;font-size:14.45px">0,0059525</div>
<div class="cell r" style="left:564px;top:465px;width:78px;font-size:14.45px">0,0018658</div>
<div class="cell r" style="left:404px;top:485px;width:78px;font-size:14.45px">-2,8</div>
<div class="cell r" style="left:484px;top:485px;width:78px;font-size:14.45px">0,0079155</div>
<div class="cell r" style="left:564px;top:485px;width:78px;font-size:14.45px">0,0025551</div>
<div class="cell r" style="left:404px;top:505px;width:78px;font-size:14.45px">-2,7</div>
<div class="cell r" style="left:484px;top:505px;width:78px;font-size:14.45px">0,0104209</div>
<div class="cell r" style="left:564px;top:505px;width:78px;font-size:14.45px">0,003467</div>
<div class="cell r" style="left:404px;top:525px;width:78px;font-size:14.45px">-2,6</div>
<div class="cell r" style="left:484px;top:525px;width:78px;font-size:14.45px">0,013583</div>
<div class="cell r" style="left:564px;top:525px;width:78px;font-size:14.45px">0,0046612</div>
<div class="cell r" style="left:404px;top:545px;width:78px;font-size:14.45px">-2,5</div>
<div class="cell r" style="left:484px;top:545px;width:78px;font-size:14.45px">0,0175283</div>
<div class="cell r" style="left:564px;top:545px;width:78px;font-size:14.45px">0,0062097</div>
<div class="cell r" style="left:404px;top:565px;width:78px;font-size:14.45px">-2,4</div>
<div class="cell r" style="left:484px;top:565px;width:78px;font-size:14.45px">0,0223945</div>
<div class="cell r" style="left:564px;top:565px;width:78px;font-size:14.45px">0,0081975</div>
<div class="cell r" style="left:404px;top:585px;width:78px;font-size:14.45px">-2,3</div>
<div class="cell r" style="left:484px;top:585px;width:78px;font-size:14.45px">0,028327</div>
<div class="cell r" style="left:564px;top:585px;width:78px;font-size:14.45px">0,0107241</div>
<div class="cell r" style="left:404px;top:605px;width:78px;font-size:14.45px">-2,2</div>
<div class="cell r" style="left:484px;top:605px;width:78px;font-size:14.45px">0,0354746</div>
<div class="cell r" style="left:564px;top:605px;width:78px;font-size:14.45px">0,0139034</div>
<div class="cell r" style="left:404px;top:625px;width:78px;font-size:14.45px">-2,1</div>
<div class="cell r" style="left:484px;top:625px;width:78px;font-size:14.45px">0,0439836</div>
<div class="cell r" style="left:564px;top:625px;width:78px;font-size:14.45px">0,0178644</div>
<div class="cell r" style="left:404px;top:645px;width:78px;font-size:14.45px">-2</div>
<div class="cell r" style="left:484px;top:645px;width:78px;font-size:14.45px">0,053991</div>
<div class="cell r" style="left:564px;top:645px;width:78px;font-size:14.45px">0,0227501</div>
<div class="cell r" style="left:404px;top:665px;width:78px;font-size:14.45px">-1,9</div>
<div class="cell r" style="left:484px;top:665px;width:78px;font-size:14.45px">0,0656158</div>
<div class="cell r" style="left:564px;top:665px;width:78px;font-size:14.45px">0,0287166</div>
<div class="cell r" style="left:404px;top:685px;width:78px;font-size:14.45px">-1,8</div>
<div class="cell r" style="left:484px;top:685px;width:78px;font-size:14.45px">0,0789502</div>
<div class="cell r" style="left:564px;top:685px;width:78px;font-size:14.45px">0,0359303</div>
<div class="cell r" style="left:404px;top:705px;width:78px;font-size:14.45px">-1,7</div>
<div class="cell r" style="left:484px;top:705px;width:78px;font-size:14.45px">0,0940491</div>
<div class="cell r" style="left:564px;top:705px;width:78px;font-size:14.45px">0,0445655</div>
<div class="cell r" style="left:404px;top:725px;width:78px;font-size:14.45px">-1,6</div>
<div class="cell r" style="left:484px;top:725px;width:78px;font-size:14.45px">0,1109208</div>
<div class="cell r" style="left:564px;top:725px;width:78px;font-size:14.45px">0,0547993</div>
<div class="cell r" style="left:404px;top:745px;width:78px;font-size:14.45px">-1,5</div>
<div class="cell r" style="left:484px;top:745px;width:78px;font-size:14.45px">0,1295176</div>
<div class="cell r" style="left:564px;top:745px;width:78px;font-size:14.45px">0,0668072</div>
<div class="cell r" style="left:404px;top:765px;width:78px;font-size:14.45px">-1,4</div>
<div class="cell r" style="left:484px;top:765px;width:78px;font-size:14.45px">0,1497275</div>
<div class="cell r" style="left:564px;top:765px;width:78px;font-size:14.45px">0,0807567</div>
<div class="cell r" style="left:404px;top:785px;width:78px;font-size:14.45px">-1,3</div>
<div class="cell r" style="left:484px;top:785px;width:78px;font-size:14.45px">0,1713686</div>
<div class="cell r" style="left:564px;top:785px;width:78px;font-size:14.45px">0,0968005</div>
<div class="cell r" style="left:404px;top:805px;width:78px;font-size:14.45px">-1,2</div>
<div class="cell r" style="left:484px;top:805px;width:78px;font-size:14.45px">0,1941861</div>
<div class="cell r" style="left:564px;top:805px;width:78px;font-size:14.45px">0,1150697</div>
<div class="cell r" style="left:404px;top:825px;width:78px;font-size:14.45px">-1,1</div>
<div class="cell r" style="left:484px;top:825px;width:78px;font-size:14.45px">0,2178522</div>
<div class="cell r" style="left:564px;top:825px;width:78px;font-size:14.45px">0,1356661</div>
<div class="cell r" style="left:404px;top:845px;width:78px;font-size:14.45px">-1</div>
<div class="cell r" style="left:484px;top:845px;width:78px;font-size:14.45px">0,2419707</div>
<div class="cell r" style="left:564px;top:845px;width:78px;font-size:14.45px">0,1586553</div>
<div class="cell r" style="left:404px;top:865px;width:78px;font-size:14.45px">-0,9</div>
<div class="cell r" style="left:484px;top:865px;width:78px;font-size:14.45px">0,2660852</div>
<div class="cell r" style="left:564px;top:865px;width:78px;font-size:14.45px">0,1840601</div>
<div class="cell r" style="left:404px;top:885px;width:78px;font-size:14.45px">-0,8</div>
<div class="cell r" style="left:484px;top:885px;width:78px;font-size:14.45px">0,2896916</div>
<div class="cell r" style="left:564px;top:885px;width:78px;font-size:14.45px">0,2118554</div>
<div class="cell r" style="left:404px;top:905px;width:78px;font-size:14.45px">-0,7</div>
<div class="cell r" style="left:484px;top:905px;width:78px;font-size:14.45px">0,3122539</div>
<div class="cell r" style="left:564px;top:905px;width:78px;font-size:14.45px">0,2419637</div>
<div class="cell r" style="left:404px;top:925px;width:78px;font-size:14.45px">-0,6</div>
<div class="cell r" style="left:484px;top:925px;width:78px;font-size:14.45px">0,3332246</div>
<div class="cell r" style="left:564px;top:925px;width:78px;font-size:14.45px">0,2742531</div>
<div class="cell r" style="left:404px;top:945px;width:78px;font-size:14.45px">-0,5</div>
<div class="cell r" style="left:484px;top:945px;width:78px;font-size:14.45px">0,3520653</div>
<div class="cell r" style="left:564px;top:945px;width:78px;font-size:14.45px">0,3085375</div>
<div class="cell r" style="left:404px;top:965px;width:78px;font-size:14.45px">-0,4</div>
<div class="cell r" style="left:484px;top:965px;width:78px;font-size:14.45px">0,3682701</div>
<div class="cell r" style="left:564px;top:965px;width:78px;font-size:14.45px">0,3445783</div>
<div class="cell r" style="left:404px;top:985px;width:78px;font-size:14.45px">-0,3</div>
<div class="cell r" style="left:484px;top:985px;width:78px;font-size:14.45px">0,3813878</div>
<div class="cell r" style="left:564px;top:985px;width:78px;font-size:14.45px">0,3820886</div>
<div class="cell r" style="left:404px;top:1005px;width:78px;font-size:14.45px">-0,2</div>
<div class="cell r" style="left:484px;top:1005px;width:78px;font-size:14.45px">0,3910427</div>
<div class="cell r" style="left:564px;top:1005px;width:78px;font-size:14.45px">0,4207403</div>
<div class="cell r" style="left:404px;top:1025px;width:78px;font-size:14.45px">-0,1</div>
<div class="cell r" style="left:484px;top:1025px;width:78px;font-size:14.45px">0,3969525</div>
<div class="cell r" style="left:564px;top:1025px;width:78px;font-size:14.45px">0,4601722</div>
<div class="cell r" style="left:404px;top:1045px;width:78px;font-size:14.45px">0</div>
<div class="cell r" style="left:484px;top:1045px;width:78px;font-size:14.45px">0,3989423</div>
<div class="cell r" style="left:564px;top:1045px;width:78px;font-size:14.45px">0,5</div>
<div class="cell r" style="left:404px;top:1065px;width:78px;font-size:14.45px">0,1</div>
<div class="cell r" style="left:484px;top:1065px;width:78px;font-size:14.45px">0,3969525</div>
<div class="cell r" style="left:564px;top:1065px;width:78px;font-size:14.45px">0,5398278</div>
<div class="cell r" style="left:404px;top:1085px;width:78px;font-size:14.45px">0,2</div>
<div class="cell r" style="left:484px;top:1085px;width:78px;font-size:14.45px">0,3910427</div>
<div class="cell r" style="left:564px;top:1085px;width:78px;font-size:14.45px">0,5792597</div>
<div class="a" style="left:642px;top:225px;width:887px;height:561px;background:#fff;border:1px solid #000"></div>
<svg class="a" style="left:0;top:0" width="2048" height="1152" viewBox="0 0 2048 1152"><rect x="678.5" y="251.5" width="835.2" height="485" fill="#c0c0c0" stroke="#8a8a8a" stroke-width="1"/><path d="M674 736.5 H1513.2" stroke="#000" stroke-width="1"/><text x="666" y="740.5" font-size="14.4" text-anchor="end" font-family="Liberation Sans">0</text><path d="M674 639.5 H1513.2" stroke="#000" stroke-width="1"/><text x="666" y="643.5" font-size="14.4" text-anchor="end" font-family="Liberation Sans">0,1</text><path d="M674 542.5 H1513.2" stroke="#000" stroke-width="1"/><text x="666" y="546.5" font-size="14.4" text-anchor="end" font-family="Liberation Sans">0,2</text><path d="M674 445.5 H1513.2" stroke="#000" stroke-width="1"/><text x="666" y="449.5" font-size="14.4" text-anchor="end" font-family="Liberation Sans">0,3</text><path d="M674 348.5 H1513.2" stroke="#000" stroke-width="1"/><text x="666" y="352.5" font-size="14.4" text-anchor="end" font-family="Liberation Sans">0,4</text><path d="M674 251.5 H1513.2" stroke="#3c3c3c" stroke-width="1"/><text x="666" y="255.5" font-size="14.4" text-anchor="end" font-family="Liberation Sans">0,5</text><path d="M678.5 251.5 V737" stroke="#000" stroke-width="1.2"/><path d="M678.5 736.5 V741.5" stroke="#000" stroke-width="1"/><path d="M691.5 736.5 V741.5" stroke="#000" stroke-width="1"/><path d="M705.5 736.5 V741.5" stroke="#000" stroke-width="1"/><path d="M719.5 736.5 V741.5" stroke="#000" stroke-width="1"/><path d="M732.5 736.5 V741.5" stroke="#000" stroke-width="1"/><path d="M746.5 736.5 V741.5" stroke="#000" stroke-width="1"/><path d="M760.5 736.5 V741.5" stroke="#000" stroke-width="1"/><path d="M773.5 736.5 V741.5" stroke="#000" stroke-width="1"/><path d="M787.5 736.5 V741.5" stroke="#000" stroke-width="1"/><path d="M801.5 736.5 V741.5" stroke="#000" stroke-width="1"/><path d="M814.5 736.5 V741.5" stroke="#000" stroke-width="1"/><path d="M828.5 736.5 V741.5" stroke="#000" stroke-width="1"/><path d="M842.5 736.5 V741.5" stroke="#000" stroke-width="1"/><path d="M855.5 736.5 V741.5" stroke="#000" stroke-width="1"/><path d="M869.5 736.5 V741.5" stroke="#000" stroke-width="1"/><path d="M883.5 736.5 V741.5" stroke="#000" stroke-width="1"/><path d="M897.5 736.5 V741.5" stroke="#000" stroke-width="1"/><path d="M910.5 736.5 V741.5" stroke="#000" stroke-width="1"/><path d="M924.5 736.5 V741.5" stroke="#000" stroke-width="1"/><path d="M938.5 736.5 V741.5" stroke="#000" stroke-width="1"/><path d="M951.5 736.5 V741.5" stroke="#000" stroke-width="1"/><path d="M965.5 736.5 V741.5" stroke="#000" stroke-width="1"/><path d="M979.5 736.5 V741.5" stroke="#000" stroke-width="1"/><path d="M992.5 736.5 V741.5" stroke="#000" stroke-width="1"/><path d="M1006.5 736.5 V741.5" stroke="#000" stroke-width="1"/><path d="M1020.5 736.5 V741.5" stroke="#000" stroke-width="1"/><path d="M1033.5 736.5 V741.5" stroke="#000" stroke-width="1"/><path d="M1047.5 736.5 V741.5" stroke="#000" stroke-width="1"/><path d="M1061.5 736.5 V741.5" stroke="#000" stroke-width="1"/><path d="M1075.5 736.5 V741.5" stroke="#000" stroke-width="1"/><path d="M1088.5 736.5 V741.5" stroke="#000" stroke-width="1"/><path d="M1102.5 736.5 V741.5" stroke="#000" stroke-width="1"/><path d="M1116.5 736.5 V741.5" stroke="#000" stroke-width="1"/><path d="M1129.5 736.5 V741.5" stroke="#000" stroke-width="1"/><path d="M1143.5 736.5 V741.5" stroke="#000" stroke-width="1"/><path d="M1157.5 736.5 V741.5" stroke="#000" stroke-width="1"/><path d="M1170.5 736.5 V741.5" stroke="#000" stroke-width="1"/><path d="M1184.5 736.5 V741.5" stroke="#000" stroke-width="1"/><path d="M1198.5 736.5 V741.5" stroke="#000" stroke-width="1"/><path d="M1211.5 736.5 V741.5" stroke="#000" stroke-width="1"/><path d="M1225.5 736.5 V741.5" stroke="#000" stroke-width="1"/><path d="M1239.5 736.5 V741.5" stroke="#000" stroke-width="1"/><path d="M1253.5 736.5 V741.5" stroke="#000" stroke-width="1"/><path d="M1266.5 736.5 V741.5" stroke="#000" stroke-width="1"/><path d="M1280.5 736.5 V741.5" stroke="#000" stroke-width="1"/><path d="M1294.5 736.5 V741.5" stroke="#000" stroke-width="1"/><path d="M1307.5 736.5 V741.5" stroke="#000" stroke-width="1"/><path d="M1321.5 736.5 V741.5" stroke="#000" stroke-width="1"/><path d="M1335.5 736.5 V741.5" stroke="#000" stroke-width="1"/><path d="M1348.5 736.5 V741.5" stroke="#000" stroke-width="1"/><path d="M1362.5 736.5 V741.5" stroke="#000" stroke-width="1"/><path d="M1376.5 736.5 V741.5" stroke="#000" stroke-width="1"/><path d="M1389.5 736.5 V741.5" stroke="#000" stroke-width="1"/><path d="M1403.5 736.5 V741.5" stroke="#000" stroke-width="1"/><path d="M1417.5 736.5 V741.5" stroke="#000" stroke-width="1"/><path d="M1431.5 736.5 V741.5" stroke="#000" stroke-width="1"/><path d="M1444.5 736.5 V741.5" stroke="#000" stroke-width="1"/><path d="M1458.5 736.5 V741.5" stroke="#000" stroke-width="1"/><path d="M1472.5 736.5 V741.5" stroke="#000" stroke-width="1"/><path d="M1485.5 736.5 V741.5" stroke="#000" stroke-width="1"/><path d="M1499.5 736.5 V741.5" stroke="#000" stroke-width="1"/><path d="M1513.5 736.5 V741.5" stroke="#000" stroke-width="1"/><text x="684.846" y="758" font-size="14.4" text-anchor="middle" font-family="Liberation Sans">-3</text><text x="821.764" y="758" font-size="14.4" text-anchor="middle" font-family="Liberation Sans">-2</text><text x="958.682" y="758" font-size="14.4" text-anchor="middle" font-family="Liberation Sans">-1</text><text x="1095.6" y="758" font-size="14.4" text-anchor="middle" font-family="Liberation Sans">0</text><text x="1232.52" y="758" font-size="14.4" text-anchor="middle" font-family="Liberation Sans">1</text><text x="1369.44" y="758" font-size="14.4" text-anchor="middle" font-family="Liberation Sans">2</text><text x="1506.35" y="758" font-size="14.4" text-anchor="middle" font-family="Liberation Sans">3</text><polyline points="684.85,731.90 698.54,730.43 712.23,728.53 725.92,726.10 739.61,723.03 753.30,719.21 767.00,714.49 780.69,708.74 794.38,701.81 808.07,693.56 821.76,683.86 835.46,672.59 849.15,659.67 862.84,645.03 876.53,628.67 890.22,610.65 903.91,591.05 917.61,570.08 931.30,547.96 944.99,525.01 958.68,501.63 972.37,478.26 986.07,455.37 999.76,433.50 1013.45,413.17 1027.14,394.91 1040.83,379.20 1054.52,366.48 1068.22,357.12 1081.91,351.39 1095.60,349.47 1109.29,351.39 1122.98,357.12 1136.68,366.48 1150.37,379.20 1164.06,394.91 1177.75,413.17 1191.44,433.50 1205.13,455.37 1218.83,478.26 1232.52,501.63 1246.21,525.01 1259.90,547.96 1273.59,570.08 1287.29,591.05 1300.98,610.65 1314.67,628.67 1328.36,645.03 1342.05,659.67 1355.74,672.59 1369.44,683.86 1383.13,693.56 1396.82,701.81 1410.51,708.74 1424.20,714.49 1437.90,719.21 1451.59,723.03 1465.28,726.10 1478.97,728.53 1492.66,730.43 1506.35,731.90" fill="none" stroke="#14148a" stroke-width="1.2"/></svg>
<div class="a" style="left:644px;top:824px;width:887px;height:400px;background:#fff;border:1px solid #000"></div>
<svg class="a" style="left:0;top:0" width="2048" height="1103" viewBox="0 0 2048 1103"><rect x="680.5" y="849.5" width="834.6" height="484.2" fill="#c0c0c0" stroke="#8a8a8a" stroke-width="1"/><path d="M676.4 1333.5 H1515" stroke="#000" stroke-width="1"/><path d="M676.4 1289.5 H1515" stroke="#000" stroke-width="1"/><path d="M676.4 1245.5 H1515" stroke="#000" stroke-width="1"/><path d="M676.4 1201.5 H1515" stroke="#000" stroke-width="1"/><path d="M676.4 1158.5 H1515" stroke="#000" stroke-width="1"/><path d="M676.4 1114.5 H1515" stroke="#000" stroke-width="1"/><path d="M676.4 1070.5 H1515" stroke="#000" stroke-width="1"/><text x="668" y="1074.5" font-size="14.4" text-anchor="end" font-family="Liberation Sans">0,6</text><path d="M676.4 1026.5 H1515" stroke="#000" stroke-width="1"/><text x="668" y="1030.5" font-size="14.4" text-anchor="end" font-family="Liberation Sans">0,7</text><path d="M676.4 982.5 H1515" stroke="#000" stroke-width="1"/><text x="668" y="986.5" font-size="14.4" text-anchor="end" font-family="Liberation Sans">0,8</text><path d="M676.4 938.5 H1515" stroke="#000" stroke-width="1"/><text x="668" y="942.5" font-size="14.4" text-anchor="end" font-family="Liberation Sans">0,9</text><path d="M676.4 894.5 H1515" stroke="#000" stroke-width="1"/><text x="668" y="898.5" font-size="14.4" text-anchor="end" font-family="Liberation Sans">1</text><path d="M676.4 849.5 H1515" stroke="#000" stroke-width="1"/><text x="668" y="853.5" font-size="14.4" text-anchor="end" font-family="Liberation Sans">1,1</text><path d="M680.5 849.5 V1333.6" stroke="#000" stroke-width="1.2"/><polyline points="687.24,1333.01 700.92,1332.78 714.60,1332.48 728.29,1332.08 741.97,1331.55 755.65,1330.87 769.33,1330.00 783.01,1328.89 796.70,1327.50 810.38,1325.76 824.06,1323.61 837.74,1320.99 851.42,1317.83 865.11,1314.04 878.79,1309.54 892.47,1304.27 906.15,1298.15 919.83,1291.10 933.52,1283.08 947.20,1274.04 960.88,1263.95 974.56,1252.80 988.24,1240.60 1001.93,1227.38 1015.61,1213.20 1029.29,1198.15 1042.97,1182.33 1056.65,1165.86 1070.34,1148.90 1084.02,1131.58 1097.70,1114.10 1111.38,1096.62 1125.06,1079.30 1138.75,1062.34 1152.43,1045.87 1166.11,1030.05 1179.79,1015.00 1193.47,1000.82 1207.16,987.60 1220.84,975.40 1234.52,964.25 1248.20,954.16 1261.88,945.12 1275.57,937.10 1289.25,930.05 1302.93,923.93 1316.61,918.66 1330.29,914.16 1343.98,910.37 1357.66,907.21 1371.34,904.59 1385.02,902.44 1398.70,900.70 1412.39,899.31 1426.07,898.20 1439.75,897.33 1453.43,896.65 1467.11,896.12 1480.80,895.72 1494.48,895.42 1508.16,895.19" fill="none" stroke="#14148a" stroke-width="1.2"/></svg>
<div class="a" style="left:0;top:1103px;width:2048px;height:27px;background:#f0f0f0"></div>
<div class="a" style="left:0;top:1103px;width:2048px;height:1px;background:#cfcfcf"></div>
<div class="a" style="left:0;top:1129px;width:2048px;height:1px;background:#c4c4c4"></div>
<svg class="a" style="left:0;top:1100px" width="60" height="30" viewBox="0 1100 60 30" fill="#b0b0b0"><path d="M14.8 1117 L22.3 1111.8 V1122.2 Z M38 1111.8 L45.3 1117 L38 1122.2 Z"/></svg>
<div class="t sh" style="left:60px;top:1108px;width:127px;line-height:16px">Black &amp; Scholes</div>
<div class="t sh" style="left:187px;top:1108px;width:104px;line-height:16px">B&amp;S Intuïtief</div>
<div class="t sh" style="left:291px;top:1108px;width:184px;line-height:16px">Betrouwbaarheidsinterval</div>
<div class="a" style="left:475px;top:1103px;width:142px;height:22px;background:#fff;border-radius:0 0 3px 3px;box-shadow:0 1px 1px rgba(0,0,0,0.3)"></div>
<div class="t sh" style="left:475px;top:1108px;width:142px;line-height:16px;color:#238a4f;font-weight:bold;font-size:12px">Normale Verdeling</div>
<div class="t sh" style="left:617px;top:1108px;width:123px;line-height:16px">Put Optiemodel</div>
<div class="t sh" style="left:740px;top:1108px;width:79px;line-height:16px">Delta</div>
<div class="t sh" style="left:819px;top:1108px;width:79px;line-height:16px">Gamma</div>
<div class="t sh" style="left:898px;top:1108px;width:88px;line-height:16px">Volatiliteit</div>
<div class="t sh" style="left:986px;top:1108px;width:99px;line-height:16px">Rendement</div>
<div class="t sh" style="left:1085px;top:1108px;width:79px;line-height:16px">Positie</div>
<div class="t sh" style="left:1164px;top:1108px;width:84px;line-height:16px">Strategie</div>
<div class="t sh" style="left:1248px;top:1108px;width:101px;line-height:16px">Exp Interval</div>
<div class="t sh" style="left:1349px;top:1108px;width:147px;line-height:16px">Future Optie Hedge</div>
<div class="t sh" style="left:1496px;top:1108px;width:79px;line-height:16px">Blad1</div>
<div class="a" style="left:60px;top:1104px;width:1px;height:21px;background:#d4d4d4"></div>
<div class="a" style="left:187px;top:1104px;width:1px;height:21px;background:#d4d4d4"></div>
<div class="a" style="left:291px;top:1104px;width:1px;height:21px;background:#d4d4d4"></div>
<div class="a" style="left:740px;top:1104px;width:1px;height:21px;background:#d4d4d4"></div>
<div class="a" style="left:819px;top:1104px;width:1px;height:21px;background:#d4d4d4"></div>
<div class="a" style="left:898px;top:1104px;width:1px;height:21px;background:#d4d4d4"></div>
<div class="a" style="left:986px;top:1104px;width:1px;height:21px;background:#d4d4d4"></div>
<div class="a" style="left:1085px;top:1104px;width:1px;height:21px;background:#d4d4d4"></div>
<div class="a" style="left:1164px;top:1104px;width:1px;height:21px;background:#d4d4d4"></div>
<div class="a" style="left:1248px;top:1104px;width:1px;height:21px;background:#d4d4d4"></div>
<div class="a" style="left:1349px;top:1104px;width:1px;height:21px;background:#d4d4d4"></div>
<div class="a" style="left:1496px;top:1104px;width:1px;height:21px;background:#d4d4d4"></div>
<div class="a" style="left:1575px;top:1104px;width:1px;height:21px;background:#d4d4d4"></div>
<div class="a" style="left:1613px;top:1104px;width:1px;height:21px;background:#d4d4d4"></div>
<svg class="a" style="left:1587px;top:1108px" width="16" height="16" viewBox="0 0 16 16" stroke="#444" stroke-width="1.6"><path d="M8 2.5 V13.5 M2.5 8 H13.5"/></svg>
<div class="a" style="left:0;top:1130px;width:2048px;height:22px;background:linear-gradient(#dedede,#d2d2d2)"></div>
<div class="t" style="left:24px;top:1133px;font-size:12px;line-height:16px;color:#4a4a4a">Gereed</div>
<div class="a" style="left:1728px;top:1129px;width:37px;height:23px;background:#b4b4b4"></div>
<svg class="a" style="left:0;top:1100px" width="2048" height="52" viewBox="0 1100 2048 52" fill="none">
<rect x="1740" y="1133.5" width="13" height="13.5" rx="1.2" fill="#fff"/>
<path d="M1744.3 1133.5 V1147 M1748.7 1133.5 V1147 M1740 1138 H1753 M1740 1142.5 H1753" stroke="#b0b0b0" stroke-width="1.3"/>
<rect x="1775.5" y="1134" width="13" height="13" stroke="#555" stroke-width="1.1"/>
<path d="M1778.5 1136.5 H1785.5 V1144.5 H1778.5 Z M1780 1138.8 H1784 M1780 1140.5 H1784 M1780 1142.2 H1784" stroke="#555" stroke-width="0.9"/>
<rect x="1811.5" y="1134" width="13" height="13" stroke="#555" stroke-width="1.1"/>
<path d="M1816 1134 V1140 M1820 1134 V1140 M1811.5 1140 H1820" stroke="#555" stroke-width="1"/>
</svg>
<div class="a" style="left:1844px;top:1140px;width:8px;height:2px;background:#555"></div>
<div class="a" style="left:1860px;top:1139px;width:98px;height:4px;border-radius:2px;background:#9a9a9a"></div>
<div class="a" style="left:1910px;top:1134px;width:13px;height:13px;border-radius:7px;background:#fff;box-shadow:0 0 0 0.8px rgba(0,0,0,0.25),0 1px 1px rgba(0,0,0,0.2)"></div>
<svg class="a" style="left:1963px;top:1134px" width="14" height="14" viewBox="0 0 14 14" stroke="#555" stroke-width="1.6"><path d="M7 2.5 V11.5 M2.5 7 H11.5"/></svg>
<div class="t" style="left:1992px;top:1132px;font-size:12.3px;line-height:16px;color:#444">150%</div>
</body></html>
